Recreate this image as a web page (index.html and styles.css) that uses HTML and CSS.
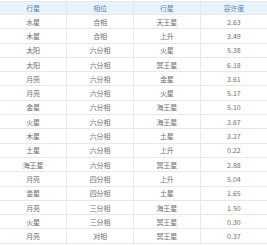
FILE: index.html
```html
<!DOCTYPE html>
<html>
<head>
<meta charset="utf-8">
<link rel="stylesheet" href="styles.css">
</head>
<body>
<table class="aspects">
<thead>
<tr><th>行星</th><th>相位</th><th>行星</th><th>容许度</th></tr>
</thead>
<tbody>
<tr><td>水星</td><td>合相</td><td>天王星</td><td>2.63</td></tr>
<tr><td>木星</td><td>合相</td><td>上升</td><td>3.49</td></tr>
<tr><td>太阳</td><td>六分相</td><td>火星</td><td>5.38</td></tr>
<tr><td>太阳</td><td>六分相</td><td>冥王星</td><td>6.18</td></tr>
<tr><td>月亮</td><td>六分相</td><td>金星</td><td>3.61</td></tr>
<tr><td>月亮</td><td>六分相</td><td>火星</td><td>5.17</td></tr>
<tr><td>金星</td><td>六分相</td><td>海王星</td><td>5.10</td></tr>
<tr><td>火星</td><td>六分相</td><td>海王星</td><td>3.67</td></tr>
<tr><td>木星</td><td>六分相</td><td>土星</td><td>3.27</td></tr>
<tr><td>土星</td><td>六分相</td><td>上升</td><td>0.22</td></tr>
<tr><td>海王星</td><td>六分相</td><td>冥王星</td><td>2.88</td></tr>
<tr><td>月亮</td><td>四分相</td><td>上升</td><td>5.04</td></tr>
<tr><td>金星</td><td>四分相</td><td>土星</td><td>1.65</td></tr>
<tr><td>月亮</td><td>三分相</td><td>海王星</td><td>1.50</td></tr>
<tr><td>火星</td><td>三分相</td><td>冥王星</td><td>0.30</td></tr>
<tr><td>月亮</td><td>对相</td><td>冥王星</td><td>0.37</td></tr>
</tbody>
</table>
</body>
</html>
```
FILE: styles.css
```css
html, body {
  margin: 0;
  padding: 0;
  background: #ffffff;
}
.aspects {
  width: 267px;
  margin-top: 1px;
  border-collapse: collapse;
  table-layout: fixed;
  font-family: "Noto Sans CJK SC", "Liberation Sans", sans-serif;
  font-size: 7px;
  color: #707070;
}
.aspects th,
.aspects td {
  border: 1px solid #e8e8e8;
  text-align: center;
  padding: 0;
  height: 13.3px;
  line-height: 8px;
  font-weight: normal;
}
.aspects th {
  background: #e9f3fb;
  color: #5a86b0;
  height: 12px;
}
.aspects tr > :first-child { border-left: none; }
.aspects tr > :last-child { border-right: none; }
```
